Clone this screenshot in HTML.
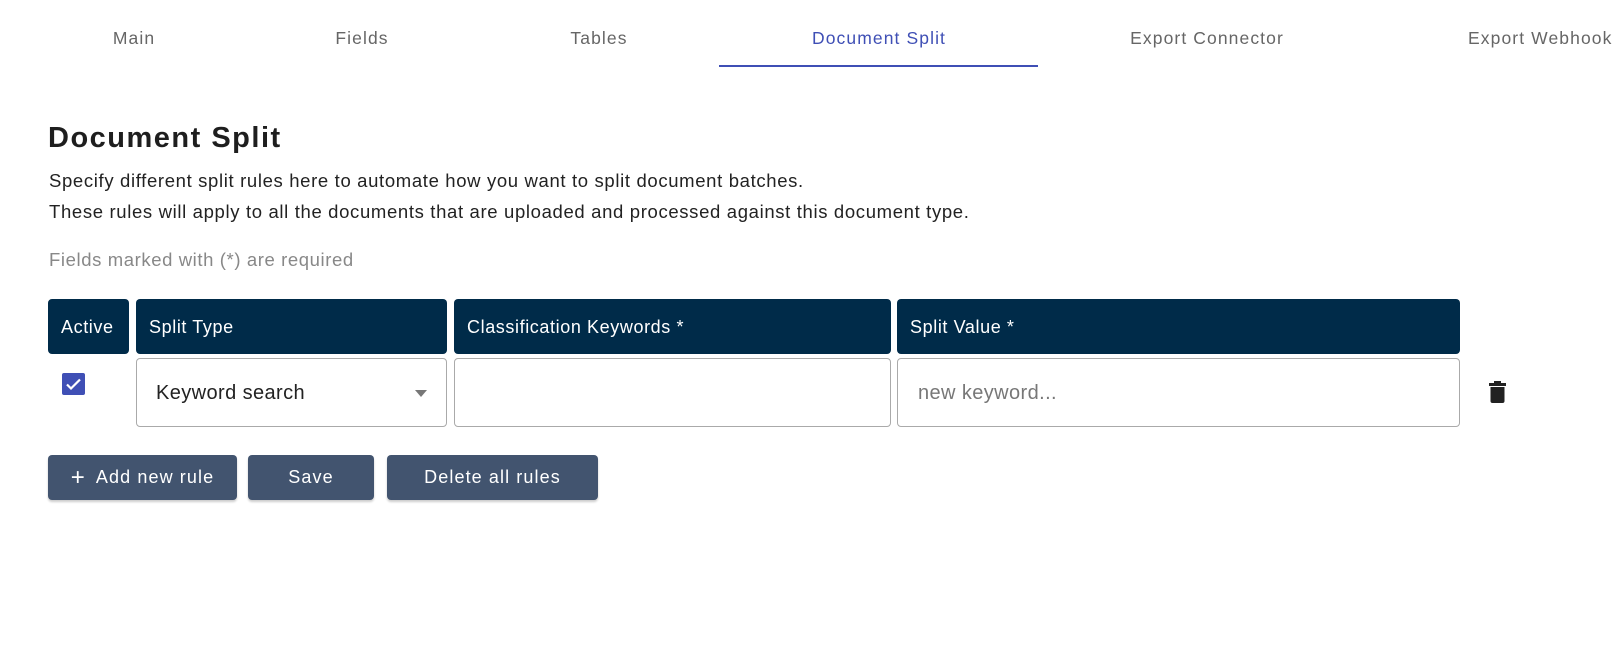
<!DOCTYPE html>
<html><head><meta charset="utf-8"><style>
*{margin:0;padding:0;box-sizing:border-box}
body{width:1623px;height:662px;background:#fff;font-family:"Liberation Sans",sans-serif;position:relative;overflow:hidden;color:#222}
.a{position:absolute;white-space:nowrap}
.tab{top:28px;font-size:17.5px;letter-spacing:1.1px;color:#666;transform:translateX(-50%)}
.hd{position:absolute;top:299px;height:55px;background:#002b49;border-radius:4px;color:#fff;font-size:18px;letter-spacing:.6px;line-height:57px;padding-left:13px}
.in{position:absolute;top:358px;height:69px;border:1px solid #aaa;border-radius:4px;background:#fff}
.btn{position:absolute;top:455px;height:45px;background:#42546f;border-radius:4px;color:#fff;font-size:18px;letter-spacing:1.1px;line-height:45px;text-align:center;box-shadow:0 2px 2px rgba(0,0,0,.2)}
</style></head><body>
<div class="a tab" style="left:134px">Main</div>
<div class="a tab" style="left:362px">Fields</div>
<div class="a tab" style="left:599px">Tables</div>
<div class="a tab" style="left:879px;color:#3f4fb5">Document Split</div>
<div class="a tab" style="left:1207px">Export Connector</div>
<div class="a tab" style="left:1468px;transform:none">Export Webhook</div>
<div class="a" style="left:719px;top:65px;width:319px;height:2px;background:#3f4fb5"></div>

<div class="a" style="left:48px;top:122px;font-size:29px;letter-spacing:1.5px;font-weight:bold;color:#1e1e1e">Document Split</div>
<div class="a" style="left:49px;top:165px;font-size:18.5px;letter-spacing:.65px;line-height:31px;color:#222">Specify different split rules here to automate how you want to split document batches.<br>These rules will apply to all the documents that are uploaded and processed against this document type.</div>
<div class="a" style="left:49px;top:249px;font-size:18.5px;letter-spacing:.6px;color:#888">Fields marked with (*) are required</div>

<div class="hd" style="left:48px;width:81px">Active</div>
<div class="hd" style="left:136px;width:311px">Split Type</div>
<div class="hd" style="left:454px;width:437px">Classification Keywords *</div>
<div class="hd" style="left:897px;width:563px">Split Value *</div>

<div class="a" style="left:62px;top:373px;width:23px;height:22px;background:#3f4fb5;border-radius:2px"><svg width="23" height="22" viewBox="0 0 23 22"><path d="M5 11.5l4 4 9-9" stroke="#fff" stroke-width="2.2" fill="none"/></svg></div>
<div class="in" style="left:136px;width:311px"><span class="a" style="left:19px;top:23px;font-size:20px;letter-spacing:.4px;color:#222">Keyword search</span><svg class="a" style="left:278px;top:31px" width="12" height="7"><path d="M0 0h12L6 7z" fill="#777"/></svg></div>
<div class="in" style="left:454px;width:437px"></div>
<div class="in" style="left:897px;width:563px"><span class="a" style="left:20px;top:23px;font-size:20px;letter-spacing:.4px;color:#777">new keyword...</span></div>
<svg class="a" style="left:1489px;top:381px" width="17" height="22" viewBox="0 0 17 22"><path d="M5 0h7v2h5v3H0V2h5z M1.5 6h14v14a2 2 0 0 1-2 2h-10a2 2 0 0 1-2-2z" fill="#222"/></svg>

<div class="btn" style="left:48px;width:189px"><span style="font-size:24px;margin-right:10px;vertical-align:top">+</span>Add new rule</div>
<div class="btn" style="left:248px;width:126px">Save</div>
<div class="btn" style="left:387px;width:211px">Delete all rules</div>
</body></html>
